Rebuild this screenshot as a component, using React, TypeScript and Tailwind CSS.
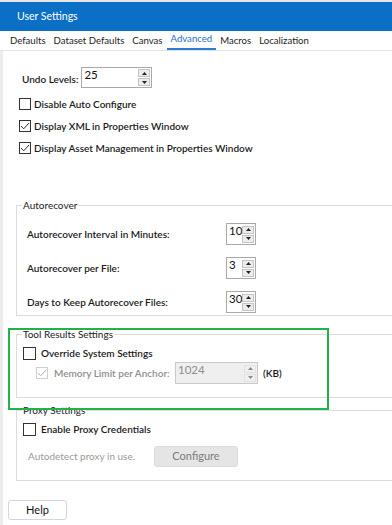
import React from 'react';

const font = { fontFamily: 'Lato, "Liberation Sans", sans-serif' };

const Arrow = ({ up, dim }: { up?: boolean; dim?: boolean }) => (
  <svg width="5" height="3" viewBox="0 0 5 3" className="block">
    <path d={up ? 'M0 3 L2.5 0 L5 3 Z' : 'M0 0 L5 0 L2.5 3 Z'} fill={dim ? '#8a8a8a' : '#222'} />
  </svg>
);

const Spinner = ({ value, box, disabled }: { value: string; box: string; disabled?: boolean }) => (
  <div
    className={`flex ${box} border ${
      disabled ? 'border-[#c9c9c9] bg-[#efefef] text-[#8d8d8d]' : 'border-[#a9a9a9] bg-white text-[#111]'
    }`}
  >
    <span className="flex-1 pl-[2px] text-[11.5px] font-normal leading-[14px]">{value}</span>
    <div className="flex flex-col justify-center gap-[1px] pr-[1px]">
      {[true, false].map((up) => (
        <div
          key={String(up)}
          className={`flex h-[8px] w-[12px] items-center justify-center border ${
            disabled ? 'border-[#e2e2e2] bg-[#efefef]' : 'border-[#c4c4c4] bg-[#ececec]'
          }`}
        >
          <Arrow up={up} dim={disabled} />
        </div>
      ))}
    </div>
  </div>
);

const Check = ({ checked, disabled, big }: { checked?: boolean; disabled?: boolean; big?: boolean }) => (
  <div
    className={`flex shrink-0 items-center justify-center border bg-white ${big ? 'h-[13px] w-[13px]' : 'h-[12px] w-[12px]'} ${
      disabled ? 'border-[#cfcfcf]' : 'border-[#333]'
    }`}
  >
    {checked && (
      <svg width="10" height="8" viewBox="0 0 10 8">
        <path d="M1 4 L3.7 6.8 L9 1" fill="none" stroke={disabled ? '#b5b5b5' : '#333'} strokeWidth="1" />
      </svg>
    )}
  </div>
);

const Group = ({ title, className, children }: { title: string; className: string; children: React.ReactNode }) => (
  <fieldset className={`-mr-[20px] ml-[13px] border border-[#dcdcdc] ${className}`}>
    <legend className="ml-[5px] px-[1px] text-[10px] font-normal leading-[12px] text-[#1a1a1a]">{title}</legend>
    {children}
  </fieldset>
);

export default function App() {
  const tabs = ['Defaults', 'Dataset Defaults', 'Canvas', 'Advanced', 'Macros', 'Localization'];
  return (
    <div className="h-[525px] w-[392px] overflow-hidden bg-white" style={font}>
      <div className="h-[2px] bg-[#e6e6e6]" />
      <div className="flex h-[29px] items-center bg-[#0b6fc6] pl-[17px] text-[10.5px] text-white">User Settings</div>

      <div className="flex h-[20px] items-end gap-[8px] border-b border-[#dde5ee] pl-[10px] text-[9.6px] text-[#1c1c1c]">
        {tabs.map((t) => (
          <span
            key={t}
            className={`pb-[2px] leading-[14px] ${
              t === 'Advanced' ? '-mx-[4px] border-b-2 border-[#2b7bd0] px-[4px] pb-[0px] text-[#2a6fbf]' : ''
            }`}
          >
            {t}
          </span>
        ))}
      </div>

      <div className="flex h-[474px] border-l-[3px] border-[#ececec]">
        <div className="flex-1 text-[10px] font-semibold text-[#1a1a1a]">
          <div className="ml-[19px] mt-[16px] flex items-center gap-[3px]">
            <span className="pt-[3px]">Undo Levels:</span>
            <Spinner value="25" box="h-[21px] w-[71px]" />
          </div>

          <div className="ml-[16px] mt-[10px] flex flex-col gap-[10px]">
            {[
              ['Disable Auto Configure', false],
              ['Display XML in Properties Window', true],
              ['Display Asset Management in Properties Window', true],
            ].map(([label, c]) => (
              <label key={label as string} className="flex h-[12px] items-center gap-[3px]">
                <Check checked={c as boolean} />
                <span>{label}</span>
              </label>
            ))}
          </div>

          <Group title="Autorecover" className="mt-[45px] h-[117px]">
            <div className="mt-[12px] flex flex-col gap-[12px] pl-[10px]">
              {[
                ['Autorecover Interval in Minutes:', '10'],
                ['Autorecover per File:', '3'],
                ['Days to Keep Autorecover Files:', '30'],
              ].map(([label, v]) => (
                <div key={label} className="flex h-[22px] items-center">
                  <span className="w-[199px]">{label}</span>
                  <Spinner value={v} box="h-[22px] w-[30px]" />
                </div>
              ))}
            </div>
          </Group>

          <div className="relative">
            <Group title="Tool Results Settings" className="mt-[12px] h-[70px]">
              <label className="ml-[6px] mt-[6px] flex items-center gap-[5px]">
                <Check big />
                <span>Override System Settings</span>
              </label>
              <div className="ml-[19px] mt-[1px] flex items-center whitespace-nowrap">
                <Check checked disabled />
                <span className="ml-[6px] w-[121px] text-[#8d8d8d]">Memory Limit per Anchor:</span>
                <Spinner value="1024" box="h-[22px] w-[83px]" disabled />
                <span className="ml-[5px]">(KB)</span>
              </div>
            </Group>
            <div className="pointer-events-none absolute left-[5px] top-[0px] h-[82px] w-[321px] border-2 border-[#22b24c]" />
          </div>

          <Group title="Proxy Settings" className="mt-[6px] h-[77px]">
            <label className="ml-[6px] mt-[6px] flex items-center gap-[5px]">
              <Check big />
              <span>Enable Proxy Credentials</span>
            </label>
            <div className="ml-[11px] mt-[9px] flex items-center">
              <span className="w-[126px] font-normal text-[#9a9a9a]">Autodetect proxy in use.</span>
              <button className="h-[21px] w-[84px] rounded-[3px] border border-[#dcdcdc] bg-[#e5e5e5] text-[11px] font-normal text-[#7c7c7c]">
                Configure
              </button>
            </div>
          </Group>

          <button className="ml-[5px] mt-[19px] h-[20px] w-[59px] rounded-[3px] border border-[#cfd6e2] bg-white text-[11px] font-normal text-[#111]">
            Help
          </button>
        </div>
      </div>
    </div>
  );
}
